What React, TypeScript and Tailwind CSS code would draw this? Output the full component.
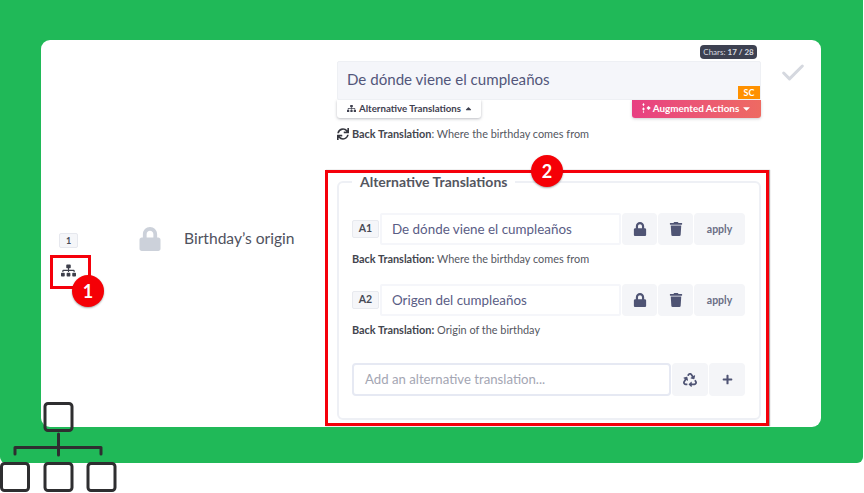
import { Check } from 'lucide-react'
import { FaCaretDown, FaCaretUp, FaLock, FaPlus, FaRecycle, FaSitemap, FaSync, FaTrash } from 'react-icons/fa'

const alternatives = [
  { id: 'A1', text: 'De dónde viene el cumpleaños', back: 'Where the birthday comes from' },
  { id: 'A2', text: 'Origen del cumpleaños', back: 'Origin of the birthday' },
]

function Marker({ label, className }: { label: string; className: string }) {
  return (
    <div
      className={`absolute flex h-[32px] w-[32px] items-center justify-center rounded-full bg-[#f50006] text-[18px] font-bold text-white shadow-[0_1px_2px_rgba(0,0,0,0.35)] ${className}`}
    >
      {label}
    </div>
  )
}

function OrgIcon() {
  return (
    <svg
      className="absolute bottom-0 left-0"
      width="118"
      height="91"
      viewBox="0 0 118 91"
      fill="none"
      stroke="#2e2e30"
      strokeWidth="3"
    >
      <rect x="45" y="1.5" width="27" height="27" rx="3" />
      <rect x="1.5" y="61.5" width="27" height="27" rx="3" />
      <rect x="45" y="61.5" width="27" height="27" rx="3" />
      <rect x="88" y="61.5" width="27" height="27" rx="3" />
      <path d="M58.5 32V53M15 52V45.5H101V52" strokeLinecap="round" strokeLinejoin="round" />
    </svg>
  )
}

export default function App() {
  return (
    <div className="relative h-[493px] w-[864px] overflow-hidden bg-white font-['Lato','Noto_Sans',sans-serif] text-[#4d5068]">
      <div className="mr-px h-[463px] rounded-b-[6px] bg-[#20b958] pb-[36px] pl-[41px] pr-[42px] pt-[40px]">
        <div className="flex h-[387px] w-[780px] items-start rounded-[9px] bg-white">
          <div className="ml-[18px] mt-[193px] flex w-[19px] flex-col items-center">
            <div className="flex h-[15px] w-[19px] items-center justify-center rounded-[2px] border border-[#e6e8ee] bg-[#f5f6f9] text-[9px] font-bold text-[#4a4c58]">
              1
            </div>
            <FaSitemap className="mt-[15px] text-[15px] text-[#3d3f4b]" />
          </div>

          <FaLock className="ml-[61px] mt-[187px] h-[24px] w-[22px] text-[#ccd1da]" />

          <div className="ml-[23px] mt-[188px] w-[153px] whitespace-nowrap text-[15.6px] leading-[20px] text-[#50525e]">
            Birthday’s origin
          </div>

          <div className="mt-[5px] w-[424px]">
            <div className="flex justify-end pr-[4px]">
              <span className="flex h-[14px] w-[57px] items-center justify-center rounded-[4px] bg-[#3d4151] text-[8px] text-[#d8dae0]">
                Chars:&nbsp;<b>17 / 28</b>
              </span>
            </div>
            <div className="relative mt-[2px] flex h-[39px] items-center rounded-[2px] border border-[#eef0f4] bg-[#f5f6fa] pb-[2px] pl-[9px] text-[15.1px] text-[#53567a]">
              De dónde viene el cumpleaños
              <span className="absolute bottom-0 right-0 flex h-[13px] w-[22px] items-center justify-center bg-[#ff9100] text-[9px] font-bold text-white">
                SC
              </span>
            </div>
            <div className="flex justify-between">
              <button className="flex h-[18px] w-[144px] items-center justify-center gap-[3px] rounded-b-[3px] bg-white pb-[2px] pl-[2px] text-[9.7px] font-bold text-[#3f4150] shadow-[0_1px_3px_rgba(60,64,80,0.35)]">
                <FaSitemap className="text-[9px]" />
                Alternative Translations
                <FaCaretUp className="text-[9px]" />
              </button>
              <button className="flex h-[18px] w-[129px] items-center justify-center gap-[2px] rounded-b-[3px] bg-gradient-to-r from-[#e83e82] to-[#ee6a62] pb-[2px] text-[9.9px] font-bold text-white shadow-[0_1px_3px_rgba(60,64,80,0.25)]">
                <svg width="10" height="10" viewBox="0 0 10 10" fill="white">
                  <path d="M2.5 0 3.6 1.6 2.5 3.2 1.4 1.6ZM7.5 3 9.8 5 7.5 7 5.5 5ZM2.5 4.2 3.8 6 2.5 7.8 1.2 6ZM2.5 8 3.3 9 2.5 10 1.7 9Z" />
                </svg>
                Augmented Actions
                <FaCaretDown className="text-[11px]" />
              </button>
            </div>
            <div className="mt-[9px] flex h-[14px] items-center gap-[3px] text-[10.9px] text-[#55575f]">
              <FaSync className="text-[12px] text-[#34363e]" />
              <span>
                <b className="text-[#43454e]">Back Translation</b>: Where the birthday comes from
              </span>
            </div>

            <fieldset className="mt-[34px] h-[245px] rounded-[6px] border-2 border-[#eef0f5] pl-[13px] pr-[14px]">
              <legend className="ml-0 px-[8px] text-[14px] font-bold leading-[14px] text-[#54565f]">
                Alternative Translations
              </legend>
              <div className="mt-[24px] flex flex-col gap-[18px]">
                {alternatives.map((alt) => (
                  <div key={alt.id}>
                    <div className="flex items-center gap-px">
                      <span className="flex h-[18px] w-[27px] items-center justify-center rounded-[2px] border border-[#e8eaef] bg-[#f5f6f9] text-[10.5px] font-bold text-[#474955]">
                        {alt.id}
                      </span>
                      <div className="flex h-[32px] w-[241px] items-center rounded-[2px] border-2 border-[#f5f6fa] pl-[10px] text-[13.4px] text-[#5a5d85]">
                        {alt.text}
                      </div>
                      <button className="flex h-[32px] w-[35px] items-center justify-center rounded-[4px] bg-[#f4f5f8] text-[#4f5474]">
                        <FaLock className="text-[14px]" />
                      </button>
                      <button className="flex h-[32px] w-[35px] items-center justify-center rounded-[4px] bg-[#f4f5f8] text-[#4f5474]">
                        <FaTrash className="text-[14px]" />
                      </button>
                      <button className="flex h-[32px] w-[51px] items-center justify-center rounded-[4px] bg-[#f4f5f8] pt-[1px] text-[10.5px] font-bold text-[#6b6e85]">
                        apply
                      </button>
                    </div>
                    <p className="mt-[7px] text-[10.9px] leading-[14px] text-[#55575f]">
                      <b className="text-[#43454e]">Back Translation:</b> {alt.back}
                    </p>
                  </div>
                ))}
              </div>
              <div className="mt-[26px] flex items-center gap-px">
                <div className="flex h-[33px] w-[319px] items-center rounded-[4px] border-2 border-[#e6e9f3] pl-[11px] text-[13.2px] text-[#a4a6b3]">
                  Add an alternative translation...
                </div>
                <button className="flex h-[33px] w-[36px] items-center justify-center rounded-[4px] bg-[#f4f5f8] text-[#4f5474]">
                  <FaRecycle className="text-[14px]" />
                </button>
                <button className="flex h-[33px] w-[36px] items-center justify-center rounded-[4px] bg-[#f4f5f8] text-[#4f5474]">
                  <FaPlus className="text-[11px]" />
                </button>
              </div>
            </fieldset>
          </div>

          <Check className="ml-[18px] mt-[19px] h-[28px] w-[28px] text-[#d5d8df]" strokeWidth={2.6} />
        </div>
      </div>

      <div className="absolute left-[50px] top-[255px] h-[34px] w-[41px] border-[3px] border-[#f5000a]" />
      <div className="absolute left-[325px] top-[170px] h-[256px] w-[444px] border-[3px] border-[#f5000a] shadow-[1px_0_1px_rgba(0,0,0,0.35)]" />
      <Marker label="1" className="left-[72px] top-[275px]" />
      <Marker label="2" className="left-[531px] top-[155px]" />
      <OrgIcon />
    </div>
  )
}
